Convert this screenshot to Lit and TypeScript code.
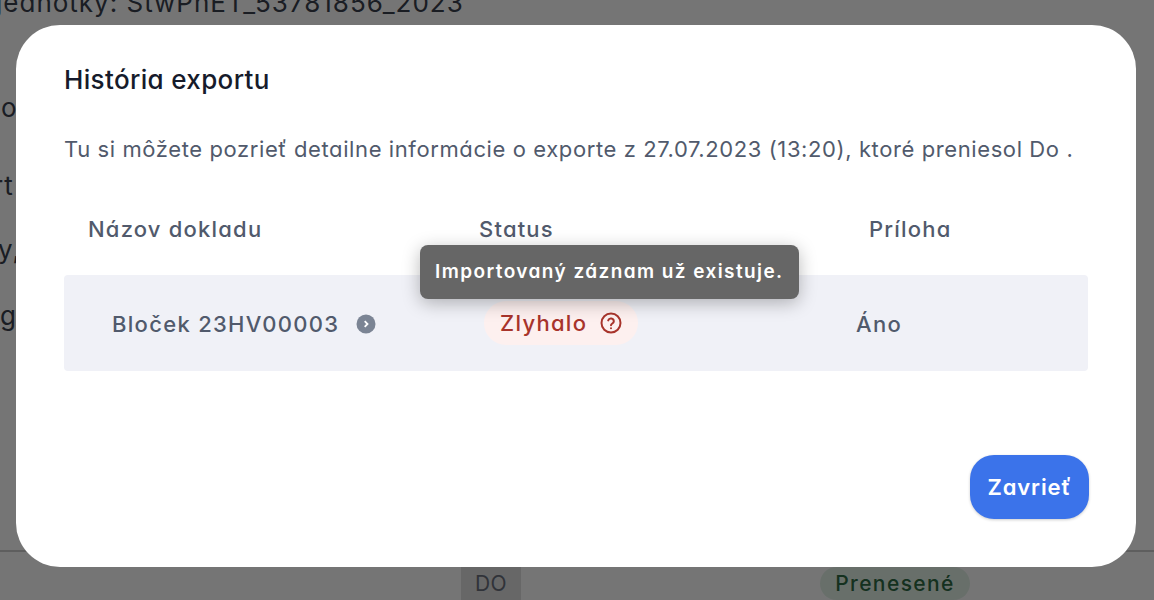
import { css, html, LitElement } from "lit";
import { customElement } from "lit/decorators.js";

@customElement("app-root")
export class AppRoot extends LitElement {
    static styles = css`
        :host {
            display: block;
            position: relative;
            height: 600px;
            overflow: hidden;
            background: #fff;
            font-family: Inter, "Liberation Sans", sans-serif;
            font-feature-settings: "cv11";
            color: #515a6c;
        }

        /* page sitting behind the dialog */
        .page {
            display: flex;
            flex-direction: column;
            height: 600px;
            color: #3a3f4e;
            font-size: 26px;
            letter-spacing: 1px;
        }

        .page .unit {
            margin: -11px 0 0 -4px;
            line-height: 28px;
            white-space: nowrap;
        }

        .page .frag {
            line-height: 28px;
            white-space: nowrap;
        }

        .page .frag.zo {
            margin: 77px 0 0 -14px;
        }

        .page .frag.rt {
            margin: 50px 0 0 -7px;
        }

        .page .frag.yc {
            margin: 36px 0 0 -2px;
        }

        .page .frag.g {
            margin: 38px 0 0 0;
        }

        .page .bottom {
            margin-top: auto;
            height: 50px;
            border-top: 2px solid #ccc;
            display: flex;
            align-items: flex-end;
            padding-left: 461px;
            box-sizing: border-box;
        }

        .chip {
            height: 33px;
            display: flex;
            align-items: center;
            justify-content: center;
            font-size: 21px;
        }

        .chip.do {
            width: 60px;
            background: #e0e0e0;
            color: #6a6f7c;
            font-weight: 400;
            letter-spacing: 0.5px;
        }

        .chip.done {
            width: 150px;
            margin-left: 299px;
            border-radius: 17px;
            background: #e3f2e8;
            color: #2f6b45;
            font-weight: 500;
            letter-spacing: 1.4px;
        }

        .overlay {
            position: absolute;
            inset: 0;
            background: rgba(0, 0, 0, 0.54);
            display: flex;
            padding: 25px 18px 33px 16px;
            box-sizing: border-box;
        }

        .modal {
            flex: 1;
            position: relative;
            display: flex;
            flex-direction: column;
            background: #fff;
            border-radius: 44px;
            padding: 38px 48px 48px;
        }

        h2 {
            margin: 0;
            font-size: 26px;
            line-height: 34px;
            font-weight: 500;
            letter-spacing: 0.35px;
            color: #161b2b;
        }

        .desc {
            margin: 36px 0 0;
            font-size: 22px;
            line-height: 32px;
            letter-spacing: 0.6px;
            white-space: nowrap;
        }

        .head {
            display: grid;
            grid-template-columns: 391px 390px 1fr;
            margin-top: 48px;
            padding-left: 24px;
            font-size: 22px;
            line-height: 32px;
            font-weight: 500;
            letter-spacing: 1.2px;
        }

        .row {
            display: grid;
            grid-template-columns: 372px 372px 1fr;
            align-items: center;
            height: 96px;
            margin-top: 30px;
            padding: 2px 0 0 48px;
            box-sizing: border-box;
            background: #f0f1f7;
            border-radius: 4px;
            font-size: 22px;
            font-weight: 500;
            letter-spacing: 1.3px;
        }

        .name {
            display: flex;
            align-items: center;
            gap: 17px;
        }

        .name svg {
            width: 20px;
            height: 20px;
        }

        .status {
            justify-self: start;
            display: flex;
            align-items: center;
            gap: 12px;
            height: 44px;
            padding: 0 15px 0 16px;
            border-radius: 22px;
            background: #fdf0ef;
            color: #a8342b;
            margin-top: -2px;
        }

        .status svg {
            width: 24px;
            height: 24px;
        }

        .tooltip {
            position: absolute;
            left: 404px;
            top: 220px;
            height: 54px;
            padding: 0 15px 2px;
            box-sizing: border-box;
            display: flex;
            align-items: center;
            border-radius: 8px;
            background: #666;
            color: #fff;
            font-size: 19px;
            font-weight: 600;
            letter-spacing: 1.42px;
            white-space: nowrap;
            box-shadow: 0 4px 18px rgba(0, 0, 0, 0.28);
        }

        .actions {
            margin-top: auto;
            margin-right: -1px;
            display: flex;
            justify-content: flex-end;
        }

        button {
            width: 119px;
            height: 64px;
            border: none;
            border-radius: 24px;
            background: #3b73ea;
            color: #fff;
            font: inherit;
            font-size: 22px;
            font-weight: 600;
            letter-spacing: 0.9px;
            box-shadow: 0 1px 3px rgba(0, 0, 0, 0.2);
        }
    `;

    render() {
        return html`
            <div class="page">
                <div class="unit">jednotky: StwPhET_53781856_2023</div>
                <div class="frag zo">zo</div>
                <div class="frag rt">rt</div>
                <div class="frag yc">y,</div>
                <div class="frag g">g</div>
                <div class="bottom">
                    <div class="chip do">DO</div>
                    <div class="chip done">Prenesené</div>
                </div>
            </div>
            <div class="overlay">
                <div class="modal">
                    <h2>História exportu</h2>
                    <p class="desc">Tu si môžete pozrieť detailne informácie o exporte z 27.07.2023 (13:20), ktoré preniesol Do .</p>
                    <div class="head">
                        <div>Názov dokladu</div>
                        <div>Status</div>
                        <div>Príloha</div>
                    </div>
                    <div class="row">
                        <div class="name">
                            <span>Bloček 23HV00003</span>
                            <svg viewBox="0 0 20 20">
                                <circle cx="10" cy="10" r="9.5" fill="#7b8494"></circle>
                                <path d="M8.7 7.2 11.5 10l-2.8 2.8" fill="none" stroke="#fff" stroke-width="1.8"></path>
                            </svg>
                        </div>
                        <div class="status">
                            <span>Zlyhalo</span>
                            <svg viewBox="0 0 24 24" fill="none" stroke="currentColor" stroke-width="2" stroke-linecap="round">
                                <circle cx="12" cy="12" r="9.5"></circle>
                                <path d="M9.2 9.4a2.9 2.9 0 0 1 5.6 1c0 1.9-2.8 2.2-2.8 3.9"></path>
                                <path d="M12 17.2v.1"></path>
                            </svg>
                        </div>
                        <div>Áno</div>
                    </div>
                    <div class="actions"><button>Zavrieť</button></div>
                    <div class="tooltip">Importovaný záznam už existuje.</div>
                </div>
            </div>
        `;
    }
}
